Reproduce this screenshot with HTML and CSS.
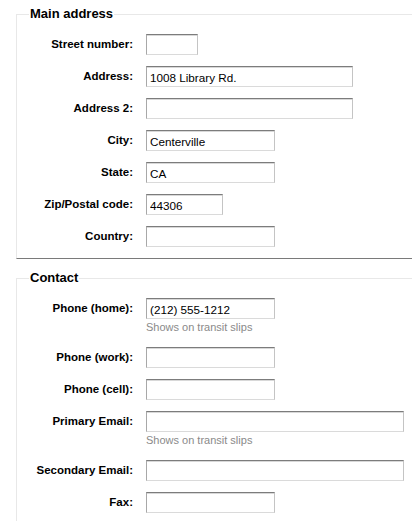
FILE: index.html
```html
<!DOCTYPE html>
<html>
<head>
<meta charset="utf-8">
<link rel="stylesheet" href="styles.css">
</head>
<body>
<div class="page">
  <fieldset class="rows first">
    <legend>Main address</legend>
    <ol>
      <li><label>Street number:</label><input class="w-s" type="text"></li>
      <li><label>Address:</label><input class="w-l" type="text" value="1008 Library Rd."></li>
      <li><label>Address 2:</label><input class="w-l" type="text"></li>
      <li><label>City:</label><input class="w-m" type="text" value="Centerville"></li>
      <li><label>State:</label><input class="w-m" type="text" value="CA"></li>
      <li><label>Zip/Postal code:</label><input class="w-z" type="text" value="44306"></li>
      <li><label>Country:</label><input class="w-m" type="text"></li>
    </ol>
  </fieldset>
  <fieldset class="rows second">
    <legend>Contact</legend>
    <ol>
      <li><label>Phone (home):</label><div class="field"><input class="w-m" type="text" value="(212) 555-1212"><div class="hint">Shows on transit slips</div></div></li>
      <li><label>Phone (work):</label><input class="w-m" type="text"></li>
      <li><label>Phone (cell):</label><input class="w-m" type="text"></li>
      <li><label>Primary Email:</label><div class="field"><input class="w-x" type="text"><div class="hint">Shows on transit slips</div></div></li>
      <li><label>Secondary Email:</label><input class="w-x" type="text"></li>
      <li><label>Fax:</label><input class="w-m" type="text"></li>
    </ol>
  </fieldset>
</div>
</body>
</html>
```
FILE: styles.css
```css
html, body {
  margin: 0;
  padding: 0;
  background: #fff;
  overflow: hidden;
}
body {
  font-family: "Liberation Sans", Arial, sans-serif;
  color: #000;
}
.page {
  padding: 0 0 0 16px;
}
fieldset.rows {
  margin: 0;
  border: 1px solid #e8e8e8;
  border-right: none;
  padding: 0 0 0 12px;
  min-width: 0;
}
fieldset.first {
  margin-top: 7px;
  border-bottom: 1px solid #7a7a7a;
  padding-bottom: 11px;
}
fieldset.first ol { padding-top: 13px; }
fieldset.second {
  margin-top: 12px;
  border-bottom: none;
  padding-bottom: 20px;
}
fieldset.second ol { padding-top: 13px; }
legend {
  font-size: 13px;
  font-weight: bold;
  padding: 0 1px;
  line-height: 14px;
}
ol {
  list-style: none;
  margin: 0;
  padding: 12px 0 0 0;
}
li {
  display: flex;
  align-items: flex-start;
  margin-bottom: 11px;
}
li:last-child { margin-bottom: 0; }
label {
  width: 104px;
  flex: none;
  text-align: right;
  font-size: 11.5px;
  font-weight: bold;
  margin-right: 13px;
  line-height: 14px;
  padding-top: 3px;
  white-space: nowrap;
}
input {
  box-sizing: border-box;
  height: 21px;
  margin: 0;
  padding: 1px 3px 0;
  font-family: "Liberation Sans", Arial, sans-serif;
  font-size: 11.7px;
  color: #000;
  background: #fff;
  border: 1px solid;
  border-color: #7c7c7c #c4c4c4 #dadada #a8a8a8;
  box-shadow: inset 0 1px 0 #d8d8d8;
  outline: none;
  display: block;
}
.w-s { width: 52px; }
.w-l { width: 207px; }
.w-m { width: 129px; }
.w-z { width: 77px; }
.w-x { width: 258px; }
.field { display: flex; flex-direction: column; }
.hint {
  font-size: 11px;
  color: #8a8a8a;
  line-height: 13px;
  margin-top: 2px;
  margin-bottom: 2px;
}
```
